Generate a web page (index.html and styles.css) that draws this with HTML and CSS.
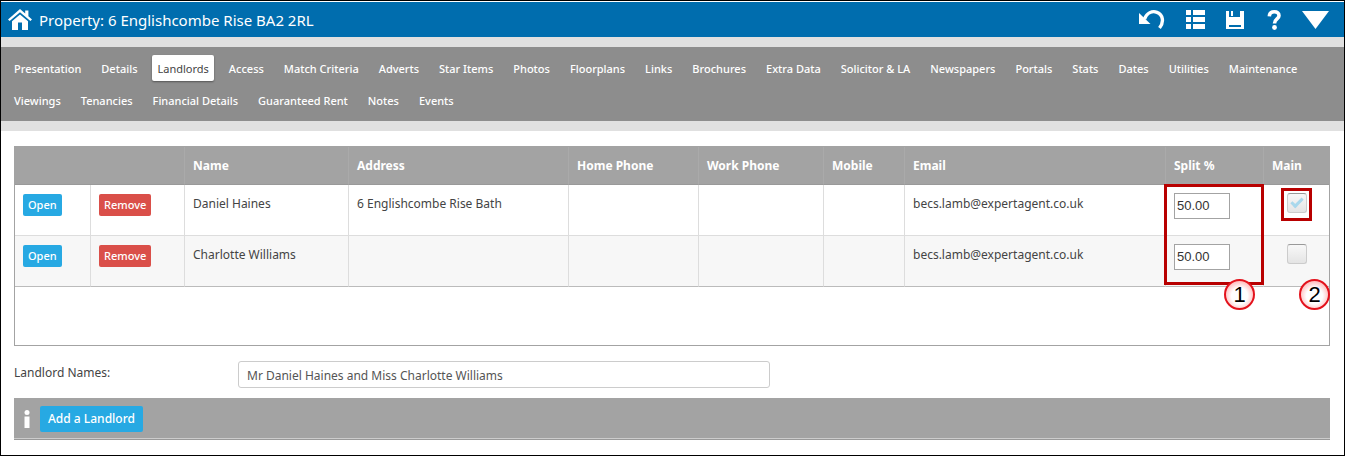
FILE: index.html
```html
<!doctype html>
<html lang="en">
<head>
	<meta charset="utf-8">
	<title>Property: 6 Englishcombe Rise BA2 2RL</title>
	<link rel="stylesheet" href="styles.css">
</head>
<body>
	<div class="page">
		<header class="topbar">
			<a class="home" href="#" aria-label="Home">
				<svg width="24" height="22" viewBox="0 0 24 22"><path fill="#fff" d="M12 0L0 10.400l1.600 1.700L12 3.200l10.400 8.900 1.600-1.700-3.600-3.100V1.500h-3.200v3zM4 12.200V21h6v-7.500h4V21h6v-8.800l-8-6.800z"/></svg>
			</a>
			<h1>Property: 6 Englishcombe Rise BA2 2RL</h1>
			<div class="tools">
				<button type="button" aria-label="Undo">
					<svg width="26" height="20" viewBox="0 0 26 20"><path fill="none" stroke="#fff" stroke-width="3.400" d="M5.500 9C8 3 13 .600 18 2.300 24 4.500 25.300 12 20.500 18"/><path fill="#fff" d="M0 3v11h11.500z"/></svg>
				</button>
				<button type="button" aria-label="List">
					<svg width="19" height="19" viewBox="0 0 19 19"><path fill="#fff" d="M0 0h5v5H0zM7 0h12v5H7zM0 7h5v5H0zM7 7h12v5H7zM0 14h5v5H0zM7 14h12v5H7z"/></svg>
				</button>
				<button type="button" aria-label="Save">
					<svg width="18" height="18" viewBox="0 0 18 18"><path fill="#fff" d="M0 0h3v6h11V0h4v18H0z"/><path fill="#fff" d="M5 0h2v5H5z"/><path fill="#006dae" d="M3 14h12v2H3z"/></svg>
				</button>
				<button type="button" aria-label="Help">
					<svg width="16" height="20" viewBox="-3 0 16 20"><path fill="none" stroke="#fff" stroke-width="3.600" d="M1.300 6.300C1.500 3.300 3.500 1.800 6.300 1.800c3 0 4.700 1.500 4.700 3.900C11 9 6.500 9 6.500 13.500"/><circle fill="#fff" cx="6.500" cy="17.500" r="2.400"/></svg>
				</button>
				<button type="button" aria-label="More">
					<svg width="27" height="18" viewBox="0 0 27 18"><path fill="#fff" d="M0 0h27L13.500 18z"/></svg>
				</button>
			</div>
		</header>

		<nav class="tabs">
			<a href="#">Presentation</a>
			<a href="#">Details</a>
			<a href="#" class="active">Landlords</a>
			<a href="#">Access</a>
			<a href="#">Match Criteria</a>
			<a href="#">Adverts</a>
			<a href="#">Star Items</a>
			<a href="#">Photos</a>
			<a href="#">Floorplans</a>
			<a href="#">Links</a>
			<a href="#">Brochures</a>
			<a href="#">Extra Data</a>
			<a href="#">Solicitor &amp; LA</a>
			<a href="#">Newspapers</a>
			<a href="#">Portals</a>
			<a href="#">Stats</a>
			<a href="#">Dates</a>
			<a href="#">Utilities</a>
			<a href="#">Maintenance</a>
			<a href="#">Viewings</a>
			<a href="#">Tenancies</a>
			<a href="#">Financial Details</a>
			<a href="#">Guaranteed Rent</a>
			<a href="#">Notes</a>
			<a href="#">Events</a>
		</nav>

		<main>
			<div class="grid">
				<table>
					<colgroup>
						<col class="c-open">
						<col class="c-remove">
						<col class="c-name">
						<col class="c-address">
						<col class="c-home">
						<col class="c-work">
						<col class="c-mobile">
						<col>
						<col class="c-split">
						<col class="c-main">
					</colgroup>
					<thead>
						<tr>
							<th colspan="2"></th>
							<th>Name</th>
							<th>Address</th>
							<th>Home Phone</th>
							<th>Work Phone</th>
							<th>Mobile</th>
							<th>Email</th>
							<th>Split %</th>
							<th>Main</th>
						</tr>
					</thead>
					<tbody>
						<tr>
							<td><button type="button" class="btn blue">Open</button></td>
							<td><button type="button" class="btn red">Remove</button></td>
							<td>Daniel Haines</td>
							<td>6 Englishcombe Rise Bath</td>
							<td></td>
							<td></td>
							<td></td>
							<td>becs.lamb@expertagent.co.uk</td>
							<td><input type="text" class="split" value="50.00" aria-label="Split % for Daniel Haines"></td>
							<td class="center"><input type="checkbox" class="check" checked aria-label="Daniel Haines is main"></td>
						</tr>
						<tr>
							<td><button type="button" class="btn blue">Open</button></td>
							<td><button type="button" class="btn red">Remove</button></td>
							<td>Charlotte Williams</td>
							<td></td>
							<td></td>
							<td></td>
							<td></td>
							<td>becs.lamb@expertagent.co.uk</td>
							<td><input type="text" class="split" value="50.00" aria-label="Split % for Charlotte Williams"></td>
							<td class="center"><input type="checkbox" class="check" aria-label="Charlotte Williams is main"></td>
						</tr>
					</tbody>
				</table>
				<div class="mark mark-split"></div>
				<div class="mark mark-main"></div>
				<span class="num num-split">1</span>
				<span class="num num-main">2</span>
			</div>

			<div class="names">
				<label for="names">Landlord Names:</label>
				<input type="text" id="names" value="Mr Daniel Haines and Miss Charlotte Williams">
			</div>

			<div class="actions">
				<svg width="6" height="18" viewBox="0 0 6 18"><circle fill="#fff" cx="3" cy="2.500" r="2.500"/><path fill="#fff" d="M.5 6.500h5V18h-5z"/></svg>
				<button type="button" class="btn blue big">Add a Landlord</button>
			</div>
		</main>
	</div>
</body>
</html>
```
FILE: styles.css
```css
*{box-sizing: border-box;}
body{
	margin: 0;
	font: 12px/22px "Segoe UI", "Noto Sans", "Open Sans", sans-serif;
	color: #444;background: #fff;
}
button,input{font: inherit;margin: 0;}
svg{display: block;}
.page{min-height: 100vh;border: 1px solid #000;padding-top: 1px;}

/* top bar */
.topbar{
	display: flex;align-items: center;
	height: 35px;padding: 0 15px 0 7px;
	background: #006dae;color: #fff;
}
.topbar h1{margin: 0 0 0 7px;font-size: 15px;font-weight: 400;}
.tools{display: flex;align-items: center;gap: 21px;margin-left: auto;}
.tools button{padding: 0;border: 0;background: none;cursor: pointer;}

/* tabs */
.tabs{
	display: flex;flex-wrap: wrap;gap: 6px 10px;
	padding: 8px;
	background: #8d8d8d;
	border: solid #e0e0e0;border-width: 10px 0;
}
.tabs a{
	height: 26px;padding: 0 5px;line-height: 28px;
	color: #fff;font-size: 11px;font-weight: 500;text-decoration: none;
	border-radius: 2px;
}
.tabs a.active{
	background: #fff;color: #444;font-weight: 400;
	box-shadow: 0 1px 2px rgba(0,0,0,.4);
}

main{padding: 15px 14px 15px 13px;}

/* landlords grid */
.grid{position: relative;height: 200px;border: 1px solid #a3a3a3;}
table{width: 100%;table-layout: fixed;border-collapse: separate;border-spacing: 0;}
.c-open{width: 76px;}
.c-remove{width: 94px;}
.c-name{width: 164px;}
.c-address{width: 220px;}
.c-home{width: 130px;}
.c-work{width: 125px;}
.c-mobile{width: 81px;}
.c-split{width: 98px;}
.c-main{width: 65px;}
th{
	height: 38px;padding: 0 8px;
	text-align: left;color: #fff;font-weight: 700;
	background: #a3a3a3;
	border-right: 1px solid #aaa;border-bottom: 1px solid #999;
}
td{
	height: 51px;padding: 8px;
	vertical-align: top;
	border-right: 1px solid #ddd;border-bottom: 1px solid #ddd;
}
th:last-child,td:last-child{border-right: 0;}
tbody tr:nth-child(even) td{background: #f7f7f7;}
tbody tr:last-child td{border-bottom-color: #bbb;}
td.center{text-align: center;}

.btn{
	display: block;height: 22px;margin-top: 1px;padding: 0 5px;
	border: 0;border-radius: 2px;
	color: #fff;line-height: 22px;font-size: 11px;font-weight: 500;
	cursor: pointer;
}
.btn.blue{background: #27a9e3;}
.btn.red{background: #da4f49;}
.btn.big{height: 26px;margin: 0;padding: 0 8px;font-size: 12px;line-height: 24px;}

.split{
	display: block;width: 56px;height: 26px;padding: 0 2px 2px;
	border: 1px solid #a3a3a3;background: #fff;color: #333;
	font-family: "Liberation Sans", Arial, sans-serif;font-size: 13px;
}
.check{
	appearance: none;display: inline-block;vertical-align: top;
	position: relative;width: 20px;height: 20px;
	border: 1px solid #ccc;border-top-color: #999;border-radius: 3px;
	background: linear-gradient(#f8f8f8, #e4e4e4);
}
.check:checked::after{
	content: "";position: absolute;left: 3px;top: 4px;
	width: 9px;height: 4px;
	border: solid #a9d8ec;border-width: 0 0 3px 3px;
	transform: rotate(-45deg);
}

/* numbered callouts */
.mark{position: absolute;border: 3px solid #b80000;}
.mark-split{right: 65px;top: 37px;width: 100px;height: 101px;}
.mark-main{right: 17px;top: 41px;width: 31px;height: 33px;}
.num{
	position: absolute;top: 132px;width: 31px;height: 31px;
	border: 2px solid #e3121c;border-radius: 50%;
	background: radial-gradient(circle at 50% 55%, #fff 40%, #fbb 75%);
	font: 22px/27px "Liberation Sans", Arial, sans-serif;
	color: #000;text-align: center;
}
.num-split{right: 74px;}
.num-main{right: -1px;}

.names{display: flex;align-items: flex-start;margin: 15px 0 10px;}
.names label{width: 224px;line-height: 24px;}
.names input{
	width: 532px;height: 27px;padding: 2px 8px 0;
	border: 1px solid #ccc;border-radius: 3px;
	color: #555;
}

.actions{
	display: flex;align-items: center;gap: 10px;
	height: 42px;padding-left: 10px;
	background: #a3a3a3;
	box-shadow: inset 0 -1px #999, inset 0 -2px #ccc;
}
```
